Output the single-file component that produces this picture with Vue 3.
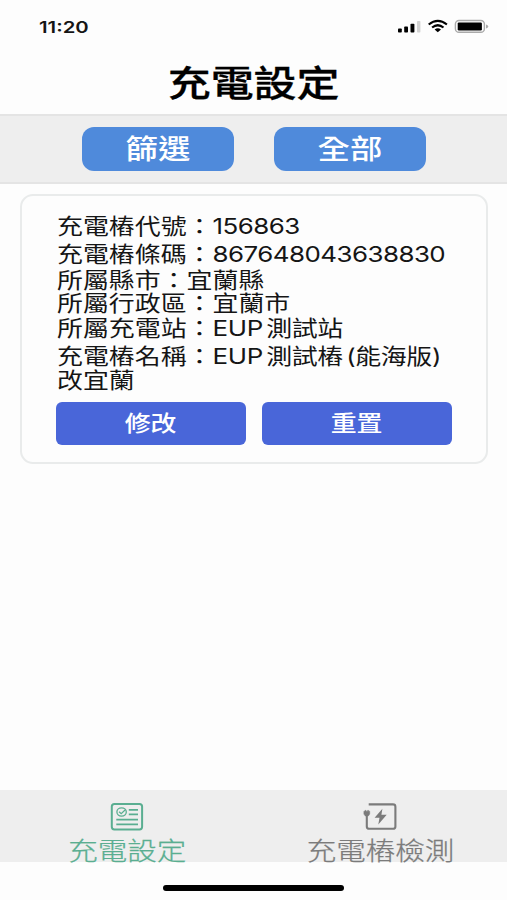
<template>
  <div class="phone" lang="zh-Hant">
    <div class="status-bar">
      <span class="clock">11:20</span>
      <svg class="status-icons" width="92" height="16" viewBox="0 0 92 16">
        <rect x="1" y="9.4" width="3.8" height="4.1" rx="0.8" />
        <rect x="7.2" y="7.4" width="3.8" height="6.1" rx="0.8" />
        <rect x="13.5" y="4.8" width="3.9" height="8.7" rx="0.8" />
        <rect x="20" y="2" width="3.4" height="11.5" rx="0.8" fill="#d2d2d2" />
        <g fill="none" stroke="#000" stroke-width="2.2">
          <path d="M31.7 5.5Q40.8 -1.6 49.9 5.5" />
          <path d="M35.1 8.5Q40.8 4 46.5 8.5" />
        </g>
        <path d="M37.6 10.4Q40.8 8 44 10.4L40.8 13.3Z" />
        <rect x="58.4" y="1.5" width="29" height="11.8" rx="3.6" fill="none" stroke="#aaa" stroke-width="1.4" />
        <rect x="60.7" y="3.4" width="24.2" height="8" rx="1.2" />
        <path d="M89 5.4Q91.2 6 91.2 7.4Q91.2 8.8 89 9.4Z" fill="#aaa" />
      </svg>
    </div>

    <header class="title"><span class="wide">充電設定</span></header>

    <div class="filter-bar">
      <button type="button"><span class="wide">篩選</span></button>
      <button type="button"><span class="wide">全部</span></button>
    </div>

    <main>
      <div class="card">
        <div v-for="row in rows" :key="row.label" class="row" :class="row.size">
          <span class="wide">{{ row.label }}：<span :class="row.type">{{ row.value }}</span></span>
        </div>
        <div class="row tail"><span class="wide">改宜蘭</span></div>
        <div class="actions">
          <button type="button"><span class="wide">修改</span></button>
          <button type="button"><span class="wide">重置</span></button>
        </div>
      </div>
    </main>

    <nav class="tabs">
      <div class="tab" :class="{ active: tab === 'settings' }" @click="tab = 'settings'">
        <svg width="34" height="30" viewBox="0 0 34 30" fill="none" stroke="currentColor">
          <rect x="1.8" y="1.9" width="30.3" height="25.5" rx="2.6" stroke-width="2" />
          <ellipse cx="11.6" cy="10" rx="4.7" ry="4.1" stroke-width="1.3" />
          <path d="M9.1 9.7L11.2 11.7L15.3 7.7" stroke-width="1.2" />
          <path d="M18.8 7.8H28M18.8 12.3H28M6.3 17.7H28M6.3 22.3H28" stroke-width="1.7" />
        </svg>
        <span class="wide">充電設定</span>
      </div>
      <div class="tab" :class="{ active: tab === 'check' }" @click="tab = 'check'">
        <svg width="34" height="30" viewBox="0 0 34 30" fill="none" stroke="currentColor">
          <path d="M5.7 2.4H30Q32.4 2.4 32.4 4.8V24.4Q32.4 26.8 30 26.8H6.2Q3.8 26.8 3.8 24.4V13" stroke-width="2.1" />
          <path d="M0.9 9.2H2V8.4H3V9.2H4.6V8.4H5.6V9.2H6.7V12.1L5.3 14H2.3L0.9 12.1Z" fill="currentColor" stroke-width="0.5" />
          <path d="M19.4 6.8L11.6 15.7H16.5L15.3 22.4L23.7 12.7H18.4Z" fill="currentColor" stroke="none" />
        </svg>
        <span class="wide">充電樁檢測</span>
      </div>
    </nav>

    <footer class="home"><div class="home-bar"></div></footer>
  </div>
</template>

<script setup>
import { ref } from "vue";

const tab = ref("settings");

// the last name is too long for one line, its tail follows as a separate row
const rows = [
  { label: "充電樁代號", value: "156863", type: "num", size: "tall" },
  { label: "充電樁條碼", value: "867648043638830", type: "num", size: "tall" },
  { label: "所屬縣市", value: "宜蘭縣", size: "city" },
  { label: "所屬行政區", value: "宜蘭市" },
  { label: "所屬充電站", value: "EUP 測試站", type: "latin", size: "mixed" },
  { label: "充電樁名稱", value: "EUP 測試樁 (能海版)", type: "latin", size: "tall" },
];
</script>

<style>
body {
  margin: 0;
  background: #fdfdfd;
}
</style>

<style scoped>
.phone {
  width: 507px;
  height: 900px;
  display: flex;
  flex-direction: column;
  overflow: hidden;
  background: #fdfdfd;
  color: #151515;
  font-family: Inter, "Noto Sans CJK TC", sans-serif;
}
.wide {
  display: inline-block;
  white-space: nowrap;
  transform: scaleX(1.2);
}
button {
  border: 0;
  padding: 0;
  color: #fff;
  font-family: inherit;
  font-weight: 500;
}
.status-bar {
  height: 53px;
  display: flex;
  justify-content: space-between;
  align-items: center;
  box-sizing: border-box;
  padding: 0 18px 0 39px;
}
.clock {
  font-size: 16px;
  font-weight: 600;
  transform: scaleX(1.27);
  transform-origin: left;
}
.title {
  height: 61px;
  line-height: 63px;
  text-align: center;
  font-size: 35.8px;
  font-weight: 500;
  color: #000;
  -webkit-text-stroke: 0.3px #000;
}
.filter-bar {
  height: 70px;
  box-sizing: border-box;
  display: flex;
  justify-content: center;
  align-items: center;
  gap: 40px;
  background: #eee;
  border-top: 2px solid #e4e4e4;
  border-bottom: 2px solid #e4e4e4;
}
.filter-bar button {
  width: 152px;
  height: 44px;
  border-radius: 12px;
  padding-top: 2px;
  background: #4f8adb;
  font-size: 27px;
  line-height: 42px;
}
main {
  flex: 1;
  padding: 10px 19px 0 20px;
}
.card {
  height: 270px;
  box-sizing: border-box;
  border: 2px solid #e9ebeb;
  border-radius: 13px;
  padding: 16px 34px 0 34px;
}
.row {
  height: 24px;
  line-height: 23px;
  font-size: 21.6px;
}
.row .wide {
  margin-left: 1px;
  transform-origin: left;
}
.row.tall {
  height: 28px;
  line-height: 28px;
}
.row.city {
  line-height: 25px;
}
.row.mixed {
  height: 26px;
  line-height: 25px;
}
.row.tail {
  line-height: 20px;
}
.num {
  letter-spacing: -0.45px;
}
.latin {
  letter-spacing: -0.3px;
  word-spacing: -3px;
}
.actions {
  display: flex;
  gap: 16px;
  margin-top: 8px;
}
.actions button {
  width: 190px;
  height: 43px;
  border-radius: 6px;
  background: #4966d9;
  font-size: 21.6px;
  line-height: 43px;
}
.tabs {
  height: 72px;
  display: flex;
  background: #eee;
}
.tab {
  flex: 1;
  display: flex;
  flex-direction: column;
  align-items: center;
  color: #7b7b7b;
  font-size: 24.6px;
  font-weight: 300;
  line-height: 38px;
  -webkit-text-stroke: 0.25px currentColor;
}
.tab svg {
  flex: none;
  margin-top: 12px;
}
.tab.active {
  color: #5aae91;
}
.home {
  height: 38px;
  display: flex;
  justify-content: center;
}
.home-bar {
  width: 181px;
  height: 6px;
  margin-top: 23px;
  border-radius: 3px;
  background: #000;
}
</style>
